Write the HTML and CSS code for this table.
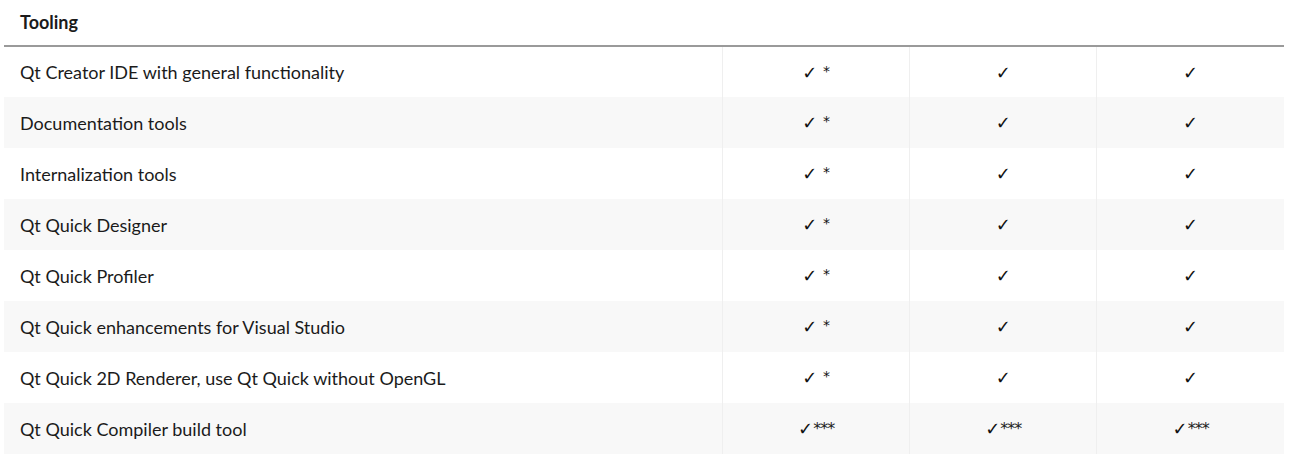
FILE: index.html
```html
<!DOCTYPE html>
<html>
<head>
<meta charset="utf-8">
<link rel="stylesheet" href="styles.css">
</head>
<body>
<table class="cmp">
  <colgroup>
    <col class="c-feat"><col class="c-v"><col class="c-v"><col class="c-v">
  </colgroup>
  <thead>
    <tr><th class="head" colspan="4">Tooling</th></tr>
  </thead>
  <tbody>
    <tr><td>Qt Creator IDE with general functionality</td><td class="chk">✓ <span class="ast">*</span></td><td class="chk">✓</td><td class="chk">✓</td></tr>
    <tr><td>Documentation tools</td><td class="chk">✓ <span class="ast">*</span></td><td class="chk">✓</td><td class="chk">✓</td></tr>
    <tr><td>Internalization tools</td><td class="chk">✓ <span class="ast">*</span></td><td class="chk">✓</td><td class="chk">✓</td></tr>
    <tr><td>Qt Quick Designer</td><td class="chk">✓ <span class="ast">*</span></td><td class="chk">✓</td><td class="chk">✓</td></tr>
    <tr><td>Qt Quick Profiler</td><td class="chk">✓ <span class="ast">*</span></td><td class="chk">✓</td><td class="chk">✓</td></tr>
    <tr><td>Qt Quick enhancements for Visual Studio</td><td class="chk">✓ <span class="ast">*</span></td><td class="chk">✓</td><td class="chk">✓</td></tr>
    <tr><td>Qt Quick 2D Renderer, use Qt Quick without OpenGL</td><td class="chk">✓ <span class="ast">*</span></td><td class="chk">✓</td><td class="chk">✓</td></tr>
    <tr><td>Qt Quick Compiler build tool</td><td class="chk">✓<sup>***</sup></td><td class="chk">✓<sup>***</sup></td><td class="chk">✓<sup>***</sup></td></tr>
  </tbody>
</table>
</body>
</html>
```

FILE: styles.css
```css
html, body {
  margin: 0;
  padding: 0;
  background: #ffffff;
}
body {
  padding: 0 5px 0 4px;
  font-family: Lato, "Open Sans", sans-serif;
  color: #1b1b1b;
}
.cmp {
  width: 1280px;
  border-collapse: collapse;
  table-layout: fixed;
}
.c-feat { width: 718px; }
.c-v { width: 187px; }
.head {
  text-align: left;
  font-size: 18px;
  font-weight: 700;
  height: 46px;
  padding: 0 16px 2px;
  border-bottom: 2px solid #9a9a9a;
  vertical-align: middle;
  box-sizing: border-box;
}
.cmp td {
  height: 51px;
  padding: 0 16px;
  font-size: 18px;
  vertical-align: middle;
  box-sizing: border-box;
}
.cmp tbody tr:nth-child(even) td {
  background: #f8f8f8;
}
.cmp td + td {
  border-left: 1px solid #efefef;
}
.chk {
  text-align: center;
  font-family: "DejaVu Sans", sans-serif;
  font-size: 15px;
  color: #111;
}
.chk .ast {
  font-size: 14px;
  position: relative;
  top: -3px;
}
.chk sup {
  font-family: "DejaVu Sans", sans-serif;
  font-size: 16px;
  font-weight: 400;
  color: #222;
  vertical-align: 1px;
  letter-spacing: -1px;
}
```
